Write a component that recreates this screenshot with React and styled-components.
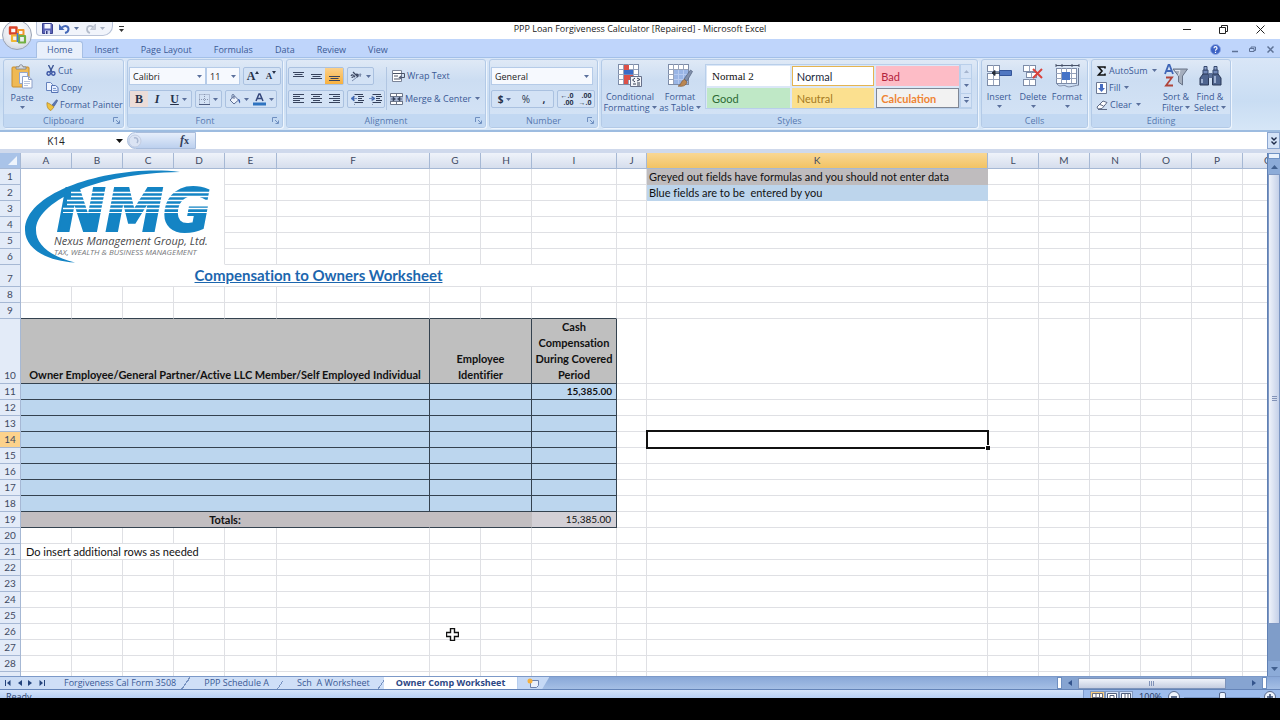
import React, { useState } from 'react'
import styled, { createGlobalStyle, css } from 'styled-components'

const ui = `'Open Sans', 'Noto Sans', sans-serif`
const sheetFont = `Lato, 'Liberation Sans', sans-serif`

const COLS = [
    ['A', 51], ['B', 51], ['C', 51], ['D', 51], ['E', 52], ['F', 153], ['G', 51], ['H', 51], ['I', 85],
    ['J', 30], ['K', 341], ['L', 51], ['M', 51], ['N', 51], ['O', 51], ['P', 51], ['Q', 51],
]
const LETTERS = COLS.map(([letter]) => letter)
const TABS = ['Home', 'Insert', 'Page Layout', 'Formulas', 'Data', 'Review', 'View']
const SHEETS = ['Forgiveness Cal Form 3508', 'PPP Schedule A', 'Sch  A Worksheet', 'Owner Comp Worksheet']

// what every row holds; cells that are not listed stay empty
const CONTENT = {
    1: [
        { at: 'A', span: 4, rows: 6, kind: 'logo' },
        { at: 'K', text: 'Greyed out fields have formulas and you should not enter data', kind: 'grey' },
    ],
    2: [{ at: 'K', text: 'Blue fields are to be  entered by you', kind: 'blue' }],
    7: [{ at: 'A', span: 9, text: 'Compensation to Owners Worksheet', kind: 'title' }],
    10: [
        { at: 'A', span: 6, text: 'Owner Employee/General Partner/Active LLC Member/Self Employed Individual', kind: 'head' },
        { at: 'G', span: 2, text: 'Employee\nIdentifier', kind: 'head' },
        { at: 'I', text: 'Cash\nCompensation\nDuring Covered\nPeriod', kind: 'head' },
    ],
    19: [
        { at: 'A', span: 6, text: 'Totals:', kind: 'total' },
        { at: 'G', span: 2, kind: 'total' },
        { at: 'I', text: '15,385.00', kind: 'sum' },
    ],
    21: [{ at: 'A', span: 4, text: 'Do insert additional rows as needed', kind: 'note' }],
}
for (let r = 11; r <= 18; r++) {
    CONTENT[r] = [
        { at: 'A', span: 6, kind: 'entry' },
        { at: 'G', span: 2, kind: 'entry' },
        { at: 'I', text: r === 11 ? '15,385.00' : '', kind: 'entry' },
    ]
}

const cellsOf = (row) => {
    const out = []
    const list = CONTENT[row] || []
    let i = row >= 2 && row <= 6 ? 4 : 0
    while (i < LETTERS.length) {
        const found = list.find((c) => c.at === LETTERS[i])
        out.push(found || { at: LETTERS[i] })
        i += (found && found.span) || 1
    }
    return out
}

/* ---------- icons ---------- */

const Svg = ({ w = 12, h = 12, children, ...rest }) => (
    <svg width={w} height={h} viewBox={`0 0 ${w} ${h}`} fill="none" aria-hidden="true" {...rest}>{children}</svg>
)
const Arrow = ({ color = '#5a709c' }) => <Svg w={5} h={3}><path d="M0 0h5L2.500 3z" fill={color} /></Svg>
const Launcher = () => (
    <Svg w={7} h={7}><path d="M.5 5V.5H5M3 3l3 3M6.500 3.500v3h-3" stroke="#6f8fc0" /></Svg>
)
const OfficeLogo = () => (
    <Svg w={20} h={20}>
        <path d="M3 2.500h6.500v6H3zM9.500 2.500v7" stroke="#d9432a" strokeWidth="2.400" strokeLinejoin="round" />
        <path d="M11 5h5.500v5H11z" stroke="#f0962c" strokeWidth="2" strokeLinejoin="round" />
        <path d="M5 10.500h5.500v5.500H5z" stroke="#f2b632" strokeWidth="2.200" strokeLinejoin="round" />
        <path d="M12 11h6v6.500h-6z" stroke="#72b043" strokeWidth="2.200" strokeLinejoin="round" />
        <path d="M10.500 8v9" stroke="#3f7fd0" strokeWidth="1.600" />
    </Svg>
)
const SaveIcon = () => (
    <Svg w={11} h={11}>
        <path d="M.5.5h9l1 1v9H.5z" fill="#5b63b8" stroke="#3b4390" />
        <path d="M2.500 1h6v4.500h-6z" fill="#f4f6ff" /><path d="M3 7.500h5V11H3z" fill="#cfd6f2" /><path d="M4 8h1.500v3H4z" fill="#333a80" />
    </Svg>
)
const UndoIcon = ({ color = '#4468b8' }) => (
    <Svg w={11} h={11}><path d="M3 4.500c3-2.500 6.500-1.500 6.500 1.500 0 2-1.500 3.500-3.500 4" stroke={color} strokeWidth="2" /><path d="M0 1v6h5.500z" fill={color} /></Svg>
)
const RedoIcon = () => (
    <Svg w={11} h={11}><path d="M8 4C5 2 2 3 2 6c0 2 1 3.500 3 4" stroke="#b4bccb" strokeWidth="1.800" /><path d="M10.500 1v5.500H5.500z" fill="#c6ccd8" stroke="#a4adbf" strokeWidth=".5" /></Svg>
)
const PasteIcon = () => (
    <Svg w={24} h={25}>
        <rect x="2" y="3" width="17" height="20" rx="1" fill="#efb954" stroke="#c98d2c" />
        <path d="M6 5V3h3c0-3 4-3 4 0h3v2z" fill="#d7dbe2" stroke="#777f8c" strokeWidth=".8" />
        <path d="M9.500 8.500h8v11h-8z" fill="#f3f6fd" stroke="#94a6cb" />
        <path d="M12.500 12.500h6l3.500 3v8.500h-9.500z" fill="#fff" stroke="#8ea1c9" /><path d="M18.500 12.500v3H22" stroke="#8ea1c9" />
        <path d="M14 17.500h6M14 19.500h6M14 21.500h4" stroke="#b9c5df" />
    </Svg>
)
const CutIcon = () => (
    <Svg w={10} h={11}>
        <path d="M2.500 0 6 7M7.500 0 4 7" stroke="#3c5694" strokeWidth="1.400" />
        <circle cx="2.700" cy="8.500" r="1.700" stroke="#3b55a5" strokeWidth="1.400" /><circle cx="7.300" cy="8.500" r="1.700" stroke="#3b55a5" strokeWidth="1.400" />
    </Svg>
)
const CopyIcon = () => (
    <Svg w={13} h={11}>
        <path d="M.5.5h4l2 2v6h-6z" fill="#eff4ff" stroke="#6582bd" /><path d="M5.500 3.500h4l2.500 2v5H5.500z" fill="#e4edff" stroke="#5673b3" />
        <path d="M7 6.500h3M7 8.500h4" stroke="#7e9bd0" />
    </Svg>
)
const BrushIcon = () => (
    <Svg w={12} h={12}>
        <path d="M6 6 10.500.8l1.200.8L8 7.500z" fill="#5c78b6" stroke="#3f5588" strokeWidth=".6" />
        <path d="M1 3.500 4 5l4 3-3 3.500C2.500 11 .5 8 1 3.500z" fill="#f0c33f" stroke="#b18322" strokeWidth=".7" />
    </Svg>
)
const BordersIcon = () => (
    <Svg w={11} h={11}><path d="M.5.5h10v10M.5.5v10M5.500 0v10M0 5.500h10" stroke="#8b98b2" strokeDasharray="1 1" /><path d="M0 10.500h11" stroke="#4c5c80" /></Svg>
)
const FillIcon = () => (
    <Svg w={12} h={11}><path d="M1 6 5.500 2l4 4-4.500 4z" fill="#eef3fc" stroke="#5d6f95" /><path d="M5 5V1.500C5 0 3 0 3 1.500V4" stroke="#5d6f95" /><path d="M9 5c2 0 2.500 2 2 4.500C10 9 9.500 7 9 5z" fill="#3c5fae" /></Svg>
)
const FontColorIcon = () => (
    <Svg w={13} h={13}><path d="M3 8 6 1h1l3 7M4.200 5.500h4.600" stroke="#34477c" strokeWidth="1.500" /><path d="M0 9.500h13v3H0z" fill="#2e73c0" /></Svg>
)
const Lines = ({ d }) => <Svg w={11} h={10}><path d={d} stroke="#38445e" strokeWidth="1.200" /></Svg>
const ALIGN = {
    top: 'M0 1.500h11M1.500 3.500h8M0 5.500h11', middle: 'M0 3.500h11M1.500 5.500h8M0 7.500h11', bottom: 'M0 5.500h11M1.500 7.500h8M0 9.500h11',
    left: 'M0 .5h11M0 2.500h7M0 4.500h11M0 6.500h7M0 8.500h11', center: 'M0 .5h11M2 2.500h7M0 4.500h11M2 6.500h7M0 8.500h11', right: 'M0 .5h11M4 2.500h7M0 4.500h11M4 6.500h7M0 8.500h11',
}
const OrientIcon = () => (
    <Svg w={13} h={11}><path d="M2 10 11 3M11 3l-1 3M11 3 8 3.500" stroke="#7c8cab" /><path d="M1 5c1-2 3-1 4 1M2 7c0-1 2-2 3-1M3 1l5 5M6 4c1-2 3 0 1.500 2" stroke="#3c4863" strokeWidth="1.200" /></Svg>
)
const IndentIcon = ({ out }) => (
    <Svg w={13} h={11}>
        <path d="M3 .5h9M7 2.500h6M7 4.500h4M7 6.500h6M3 8.500h9" stroke="#333f59" strokeWidth="1.200" />
        <path d={out ? 'M0 4.500 3 2v5zM3 4.500h3' : 'M6 4.500 3 2v5zM0 4.500h3'} fill="#3f68b5" stroke="#3f68b5" strokeWidth=".7" /><path d="M3.500 0v11" stroke="#8492ad" strokeDasharray="1 1" />
    </Svg>
)
const WrapIcon = () => (
    <Svg w={13} h={12}><path d="M.5.500h9v11h-9z" fill="#fff" stroke="#7b8498" /><path d="M1 3.500h11.500v4H8M2 6h4M2 9h6" stroke="#4a5366" /><path d="M9.500 5 6.500 7.500l3 2.500z" fill="#56617a" /></Svg>
)
const MergeIcon = () => (
    <Svg w={13} h={12}><path d="M.5.5h12v11H.5zM.5 3.500h12M.5 8.500h12M6.500.5v3M6.500 8.500v3" fill="#fff" stroke="#6c768a" /><path d="M0 6h13" stroke="#aab8d4" strokeWidth="4" /><path d="M1 6h3M12 6H9M3 4l2.500 2L3 8zM10 4 7.500 6 10 8z" fill="#333f59" stroke="#333f59" strokeWidth=".6" /></Svg>
)
const Table = ({ x = 0, y = 0, c = 4, r = 4, s = 5 }) => (
    <g>
        <rect x={x + 0.5} y={y + 0.5} width={c * s} height={r * s} fill="#fff" stroke="#7d8ca8" />
        {Array.from({ length: c - 1 }, (_, i) => <path key={'c' + i} d={`M${x + 0.5 + (i + 1) * s} ${y}v${r * s}`} stroke="#97a3bb" />)}
        {Array.from({ length: r - 1 }, (_, i) => <path key={'r' + i} d={`M${x} ${y + 0.5 + (i + 1) * s}h${c * s}`} stroke="#97a3bb" />)}
    </g>
)
const ConditionalIcon = () => (
    <Svg w={24} h={24}>
        <Table /><path d="M6 1h5v5H6zM6 11h9v5H6zM6 16h4v4H6z" fill="#dc5048" /><path d="M6 6h9v4.500H6z" fill="#3a6cc7" />
        <path d="M12.500 12.500h11v10h-11z" fill="#f3f5fa" stroke="#66708a" /><path d="m17 14-2.500 2 2.500 2M19 14l3 1.500-3 1.500M15 20h3M19 19h3M19 21h3" stroke="#333c52" />
    </Svg>
)
const FormatTableIcon = () => (
    <Svg w={25} h={24}>
        <Table /><path d="M6 6h14v14H6z" fill="#7fa2df" fillOpacity=".8" /><path d="M10.500 6v14M15.500 6v14M6 10.500h14M6 15.500h14" stroke="#b5caf0" />
        <path d="M16 15 22.500 6l2 1.500L19 17z" fill="#8190ab" stroke="#53617e" strokeWidth=".7" /><path d="M10 22c3 0 3-6 6.500-6.500L19 18c-1 4-5 5-9 4z" fill="#b98652" stroke="#7a532d" strokeWidth=".6" />
    </Svg>
)
const InsertIcon = () => (
    <Svg w={25} h={24}><Table c={2} r={1} s={6} y={1} /><Table c={2} r={2} s={6} y={9} /><path d="M12.500 6.500h12v5h-12z" fill="#5077c1" stroke="#35569a" /><path d="M5 9h8M5 9l3-2.500V11.500z" fill="#222" stroke="#28303f" /></Svg>
)
const DeleteIcon = () => (
    <Svg w={21} h={24}><Table c={2} r={1} s={6} y={1} /><Table c={2} r={1} s={5} x={3} y={8} /><Table c={2} r={1} s={6} y={15} /><path d="m10 5 9 9M19 5l-9 9" stroke="#d9433c" strokeWidth="2" /></Svg>
)
const FormatIcon = () => (
    <Svg w={25} h={24}><Table x={1} y={4} c={4} r={3} s={5} /><path d="M7 8h8v8H7z" fill="#4674c7" /><path d="M1 1.500h23M1 0v3M24 0v3M7 0v3M17 0v3" stroke="#49536a" /><path d="M2 20c3 4 6 0 9 2s6 0 13-1" stroke="#7c8aa6" /><path d="M23.500 4v17" stroke="#6d7b97" /></Svg>
)
const FillDownIcon = () => (
    <Svg w={11} h={12}><path d="M.5.5h10v11H.5z" fill="#fff" stroke="#6c7994" /><path d="M4 2h3v4h2l-3.500 4L2 6h2z" fill="#456bc1" /></Svg>
)
const EraserIcon = () => (
    <Svg w={12} h={10}><path d="M1 7 7 1l4 1.500L6 8.500l-4 .5z" fill="#fff" stroke="#5d6a86" /><path d="M4 4.500 7.500 6M2 9.500h9" stroke="#5d6a86" /></Svg>
)
const SortIcon = () => (
    <Svg w={24} h={24}>
        <path d="M9 5h14.500l-5 7v9l-4-3v-6z" fill="#a5aebd" stroke="#697488" /><path d="M11 6.500h5l-1.500 5" stroke="#e2e7ef" />
        <path d="m1 10 3.500-9h1L9 10M2.500 7h5" stroke="#3f66b6" strokeWidth="1.800" /><path d="M2 13.500h6L2 21.500h7" stroke="#b0443b" strokeWidth="1.800" />
    </Svg>
)
const FindIcon = () => (
    <Svg w={23} h={24}>
        <path d="M4 6h5v6H4zM14 6h5v6h-5z" fill="#7188b8" stroke="#37496f" /><path d="M5 2.500h3V6H5zM15 2.500h3V6h-3z" fill="#8fa3cc" stroke="#37496f" />
        <path d="M1 14 4 10h5.500v11H1zM22 14l-3-4h-5.500v11H22z" fill="#4e648f" stroke="#2a3857" /><path d="M9.500 9h4v5h-4z" fill="#5b7099" /><path d="M3 15v4M16 12v7" stroke="#b9c8e6" strokeWidth="1.500" />
    </Svg>
)

const NmgLogo = () => (
    <svg width="203" height="95" viewBox="0 0 203 95" role="img" aria-label="Nexus Management Group, Ltd.">
        <path d="M159 3C97-5 4 20 4 61c0 19 22 31 50 32.500C29 87 15 76 15 61 15 34 72 4 159 3z" fill="#1484c4" />
        <text x="36" y="62" fill="#1484c4" stroke="#1484c4" strokeWidth="2" fontFamily="'DejaVu Sans', sans-serif" fontSize="58" fontWeight="700" fontStyle="italic">NMG</text>
        <path d="M50 23.500h152M50 27.500h152M46 31.500h156M46 35.500h156M42 39.500h160" stroke="#fff" strokeWidth="1.400" />
        <path d="M42 43.500h160" stroke="#fff" />
        <text x="33" y="76" fill="#4a4a4c" fontFamily={ui} fontSize="11" fontStyle="italic">Nexus Management Group, Ltd.</text>
        <text x="33" y="86" fill="#77797c" fontFamily={ui} fontSize="8" fontStyle="italic">TAX, WEALTH &amp; BUSINESS MANAGEMENT</text>
    </svg>
)

/* ---------- page ---------- */

const App = () => {
    const [tab, setTab] = useState('Home')
    const [sheet, setSheet] = useState(SHEETS[3])
    const [formula, setFormula] = useState('')

    return (
        <Screen>
            <Global />
            <Window>
                <OfficeButton aria-label="Office Button"><OfficeLogo /></OfficeButton>
                <TitleBar>
                    <TitleSide>
                        <QuickAccess>
                            <Plain aria-label="Save"><SaveIcon /></Plain>
                            <Plain aria-label="Undo"><UndoIcon /><Arrow /></Plain>
                            <Plain aria-label="Redo"><RedoIcon /><Arrow color="#a7b0c2" /></Plain>
                        </QuickAccess>
                        <Plain aria-label="Customize Quick Access Toolbar"><Svg w={5} h={6}><path d="M0 .5h5" stroke="#333" /><path d="M0 3h5L2.500 6z" fill="#333" /></Svg></Plain>
                    </TitleSide>
                    <Title>PPP Loan Forgiveness Calculator [Repaired] - Microsoft Excel</Title>
                    <WindowButtons>
                        <Plain aria-label="Minimize"><Svg w={8} h={9}><path d="M0 4.500h8" stroke="#222" /></Svg></Plain>
                        <Plain aria-label="Restore"><Svg w={9} h={9}><path d="M.5 2.500h6v6h-6zM2.500 2V.5h6v6H7" stroke="#222" /></Svg></Plain>
                        <Plain aria-label="Close"><Svg w={9} h={9}><path d="m.5.500 8 8M8.500.5l-8 8" stroke="#222" /></Svg></Plain>
                    </WindowButtons>
                </TitleBar>
                <TabBar>
                    {TABS.map((name) => (
                        <RibbonTab key={name} $on={name === tab} onClick={() => setTab(name)}>{name}</RibbonTab>
                    ))}
                    <BookButtons>
                        <Plain aria-label="Help"><Svg w={11} h={11}><circle cx="5.500" cy="5.500" r="5" fill="#3c62c4" stroke="#8faae6" /><path d="M4 4.200c0-2 3-2 3 0C7 5.500 5.500 5.300 5.500 6.700M5.500 7.700v1.200" stroke="#fff" strokeWidth="1.200" /></Svg></Plain>
                        <Plain aria-label="Minimize workbook"><Svg w={6} h={7}><path d="M0 5.500h6" stroke="#5e7296" strokeWidth="1.500" /></Svg></Plain>
                        <Plain aria-label="Restore workbook"><Svg w={7} h={7}><path d="M.5 2.500h4.500v3H.5zM2 2V1h4.500v3.500H5" stroke="#5e7296" /></Svg></Plain>
                        <Plain aria-label="Close workbook"><Svg w={7} h={7}><path d="m.5.500 6 6M6.500.5l-6 6" stroke="#5e7296" strokeWidth="1.500" /></Svg></Plain>
                    </BookButtons>
                </TabBar>

                <Ribbon>
                    <Group $w={121}>
                        <GroupBody>
                            <Big><PasteIcon />Paste<Arrow /></Big>
                            <Stack>
                                <Small><CutIcon />Cut</Small>
                                <Small><CopyIcon />Copy</Small>
                                <Small><BrushIcon />Format Painter</Small>
                            </Stack>
                        </GroupBody>
                        <GroupLabel>Clipboard<Launch aria-label="Clipboard options"><Launcher /></Launch></GroupLabel>
                    </Group>

                    <Group $w={156}>
                        <Rows>
                            <Line>
                                <Picker>
                                    <Combo $w={77} aria-label="Font"><option>Calibri</option></Combo><Arrow />
                                </Picker>
                                <Picker>
                                    <Combo $w={34} aria-label="Font size"><option>11</option></Combo><Arrow />
                                </Picker>
                                <Spacer />
                                <Set>
                                    <Tool $serif aria-label="Increase font size"><b>A</b><Svg w={4} h={10}><path d="M0 3h4L2 0z" fill="#27324a" /></Svg></Tool>
                                    <Tool $serif $small aria-label="Decrease font size"><b>A</b><Svg w={4} h={10}><path d="M0 0h4L2 3z" fill="#27324a" /></Svg></Tool>
                                </Set>
                            </Line>
                            <Line>
                                <Set>
                                    <Tool $serif $warm aria-label="Bold"><b>B</b></Tool>
                                    <Tool $serif aria-label="Italic"><b><i>I</i></b></Tool>
                                    <Tool $wide $serif aria-label="Underline"><b><u>U</u></b><Arrow /></Tool>
                                </Set>
                                <Set><Tool $wide aria-label="Borders"><BordersIcon /><Arrow /></Tool></Set>
                                <Set>
                                    <Tool $wide aria-label="Fill color"><FillIcon /><Arrow /></Tool>
                                    <Tool $wide aria-label="Font color"><FontColorIcon /><Arrow /></Tool>
                                </Set>
                            </Line>
                        </Rows>
                        <GroupLabel>Font<Launch aria-label="Font options"><Launcher /></Launch></GroupLabel>
                    </Group>

                    <Group $w={200}>
                        <GroupBody>
                            <Rows>
                                <Line>
                                    <Set>
                                        <Tool aria-label="Top align"><Lines d={ALIGN.top} /></Tool>
                                        <Tool aria-label="Middle align"><Lines d={ALIGN.middle} /></Tool>
                                        <Tool $on aria-label="Bottom align"><Lines d={ALIGN.bottom} /></Tool>
                                    </Set>
                                    <Set><Tool $wide aria-label="Orientation"><OrientIcon /><Arrow /></Tool></Set>
                                </Line>
                                <Line>
                                    <Set>
                                        <Tool aria-label="Align left"><Lines d={ALIGN.left} /></Tool>
                                        <Tool aria-label="Center"><Lines d={ALIGN.center} /></Tool>
                                        <Tool aria-label="Align right"><Lines d={ALIGN.right} /></Tool>
                                    </Set>
                                    <Set>
                                        <Tool aria-label="Decrease indent"><IndentIcon out /></Tool>
                                        <Tool aria-label="Increase indent"><IndentIcon /></Tool>
                                    </Set>
                                </Line>
                            </Rows>
                            <Divided>
                                <Small><WrapIcon />Wrap Text</Small>
                                <Small><MergeIcon />Merge &amp; Center<Arrow /></Small>
                            </Divided>
                        </GroupBody>
                        <GroupLabel>Alignment<Launch aria-label="Alignment options"><Launcher /></Launch></GroupLabel>
                    </Group>

                    <Group $w={109}>
                        <Rows>
                            <Line>
                                <Picker>
                                    <Combo $w={102} aria-label="Number format"><option>General</option></Combo><Arrow />
                                </Picker>
                            </Line>
                            <Line>
                                <Set>
                                    <Tool $wide aria-label="Accounting format"><b>$</b><Arrow /></Tool>
                                    <Tool aria-label="Percent">%</Tool>
                                    <Tool aria-label="Comma"><b>,</b></Tool>
                                </Set>
                                <Set>
                                    <Tool $digits aria-label="Increase decimal">←.0{'\n'}.00</Tool>
                                    <Tool $digits aria-label="Decrease decimal">.00{'\n'}→.0</Tool>
                                </Set>
                            </Line>
                        </Rows>
                        <GroupLabel>Number<Launch aria-label="Number options"><Launcher /></Launch></GroupLabel>
                    </Group>

                    <Group $w={377}>
                        <GroupBody>
                            <Big $w={56}>
                                <ConditionalIcon />
                                <TwoLines><span>Conditional</span><span>Formatting<Arrow /></span></TwoLines>
                            </Big>
                            <Big $w={44}>
                                <FormatTableIcon />
                                <TwoLines><span>Format</span><span>as Table<Arrow /></span></TwoLines>
                            </Big>
                            <Gallery>
                                <Swatch $bg="#fff" $color="#111" $serif>Normal 2</Swatch>
                                <Swatch $bg="#fff" $color="#222a3c" $line="#e5b450">Normal</Swatch>
                                <Swatch $bg="#fdbcc6" $color="#b3243c">Bad</Swatch>
                                <Swatch $bg="#bfe8c6" $color="#2c6b35">Good</Swatch>
                                <Swatch $bg="#fbe08f" $color="#a57a1e">Neutral</Swatch>
                                <Swatch $bg="#f2f2f2" $color="#ef8432" $line="#7f8795" $bold>Calculation</Swatch>
                            </Gallery>
                            <GalleryScroll>
                                <Plain aria-label="Previous styles"><Svg w={5} h={3}><path d="M0 3h5L2.500 0z" fill="#a5b4cd" /></Svg></Plain>
                                <Plain aria-label="Next styles"><Arrow /></Plain>
                                <Plain aria-label="More styles"><Svg w={5} h={6}><path d="M0 .5h5" stroke="#5a709c" /><path d="M0 3h5L2.500 6z" fill="#5a709c" /></Svg></Plain>
                            </GalleryScroll>
                        </GroupBody>
                        <GroupLabel>Styles</GroupLabel>
                    </Group>

                    <Group $w={107}>
                        <GroupBody>
                            <Big $w={34}><InsertIcon />Insert<Arrow /></Big>
                            <Big $w={34}><DeleteIcon />Delete<Arrow /></Big>
                            <Big $w={34}><FormatIcon />Format<Arrow /></Big>
                        </GroupBody>
                        <GroupLabel>Cells</GroupLabel>
                    </Group>

                    <Group $w={140}>
                        <GroupBody>
                            <Stack $w={67}>
                                <Small><Svg w={11} h={10}><path d="M9 2.500V1H2.500L6 5 2.500 9H9V7.500" stroke="#111" strokeWidth="1.600" /></Svg>AutoSum<Arrow /></Small>
                                <Small><FillDownIcon />Fill<Arrow /></Small>
                                <Small><EraserIcon />Clear<Arrow /></Small>
                            </Stack>
                            <Big $w={34}>
                                <SortIcon />
                                <TwoLines><span>Sort &amp;</span><span>Filter<Arrow /></span></TwoLines>
                            </Big>
                            <Big $w={34}>
                                <FindIcon />
                                <TwoLines><span>Find &amp;</span><span>Select<Arrow /></span></TwoLines>
                            </Big>
                        </GroupBody>
                        <GroupLabel>Editing</GroupLabel>
                    </Group>
                </Ribbon>

                <FormulaBar>
                    <NameBox aria-label="Name box" defaultValue="K14" />
                    <Plain aria-label="Name list"><Svg w={7} h={4}><path d="M0 0h7L3.500 4z" fill="#111" /></Svg></Plain>
                    <FxPill>
                        <Svg w={14} h={14}><circle cx="7" cy="7" r="6" fill="#dbe4f4" stroke="#c2cde2" /><path d="M6 4c3-1 5 2 3 5" stroke="#aab8d2" strokeWidth="1.500" /></Svg>
                        <Plain aria-label="Insert function"><i>f</i><small>x</small></Plain>
                    </FxPill>
                    <FormulaInput aria-label="Formula bar" value={formula} onChange={(e) => setFormula(e.target.value)} />
                    <Expand aria-label="Expand formula bar"><Svg w={6} h={8}><path d="m.5.500 2.500 2.500L5.500.5M.5 4.500 3 7l2.500-2.500" stroke="#1d2b4a" strokeWidth="1.400" /></Svg></Expand>
                </FormulaBar>

                <Workspace>
                    <SheetArea>
                        <Grid>
                            <colgroup>
                                <Col $w={21} />
                                {COLS.map(([letter, w]) => <Col key={letter} $w={w} />)}
                            </colgroup>
                            <thead>
                                <tr>
                                    <Corner aria-label="Select all"><Svg w={9} h={9}><path d="M9 0v9H0z" fill="#eef4fc" /></Svg></Corner>
                                    {LETTERS.map((letter) => <ColHead key={letter} scope="col" $on={letter === 'K'}>{letter}</ColHead>)}
                                </tr>
                            </thead>
                            <tbody>
                                {Array.from({ length: 29 }, (_, i) => i + 1).map((row) => (
                                    <tr key={row}>
                                        <RowHead scope="row" $on={row === 14}>{row}</RowHead>
                                        {cellsOf(row).map(({ at, span, rows, text, kind }) => (
                                            <Cell
                                                key={at}
                                                colSpan={span}
                                                rowSpan={rows}
                                                $kind={kind}
                                                $edge={row === 9 && at < 'J'}
                                                $active={row === 14 && at === 'K'}
                                            >
                                                {kind === 'logo' ? <NmgLogo /> : text}
                                            </Cell>
                                        ))}
                                    </tr>
                                ))}
                            </tbody>
                        </Grid>
                        <Pointer><Svg w={13} h={13}><path d="M4.500.5h4v4h4v4h-4v4h-4v-4h-4v-4h4z" fill="#fff" stroke="#111" strokeWidth="1.400" /></Svg></Pointer>
                    </SheetArea>
                    <VScroll>
                        <SplitTop />
                        <VArrow aria-label="Scroll up"><Svg w={7} h={4}><path d="M0 4h7L3.500 0z" fill="#41608f" /></Svg></VArrow>
                        <VThumb><Svg w={5} h={6}><path d="M0 .5h5M0 2.500h5M0 4.500h5" stroke="#8293b8" /></Svg></VThumb>
                        <VTrack />
                        <VArrow aria-label="Scroll down"><Svg w={7} h={4}><path d="M0 0h7L3.500 4z" fill="#41608f" /></Svg></VArrow>
                    </VScroll>
                </Workspace>

                <SheetBar>
                    <SheetNav>
                        <Plain aria-label="First sheet"><Svg w={6} h={6}><path d="M.5 0v6" stroke="#25447c" /><path d="M5.500 0v6L2 3z" fill="#25447c" /></Svg></Plain>
                        <Plain aria-label="Previous sheet"><Svg w={4} h={6}><path d="M4 0v6L0 3z" fill="#25447c" /></Svg></Plain>
                        <Plain aria-label="Next sheet"><Svg w={4} h={6}><path d="M0 0v6l4-3z" fill="#25447c" /></Svg></Plain>
                        <Plain aria-label="Last sheet"><Svg w={6} h={6}><path d="M5.500 0v6" stroke="#25447c" /><path d="M.5 0v6L4 3z" fill="#25447c" /></Svg></Plain>
                    </SheetNav>
                    {SHEETS.map((name) => (
                        <SheetTab key={name} $on={name === sheet} onClick={() => setSheet(name)}>{name}</SheetTab>
                    ))}
                    <NewSheet aria-label="Insert worksheet"><Svg w={12} h={10}><path d="M3.500 2.500h8v5l-2 2h-6z" fill="#e9f0fc" stroke="#6d82ad" /><circle cx="3" cy="3" r="2.500" fill="#f4b03e" /></Svg></NewSheet>
                    <HScroll>
                        <SplitSide />
                        <Plain aria-label="Scroll left"><Svg w={4} h={6}><path d="M4 0v6L0 3z" fill="#34548c" /></Svg></Plain>
                        <HThumb><Svg w={6} h={5}><path d="M.5 0v5M2.500 0v5M4.500 0v5" stroke="#8293b8" /></Svg></HThumb>
                        <HTrack />
                        <Plain aria-label="Scroll right"><Svg w={4} h={6}><path d="M0 0v6l4-3z" fill="#34548c" /></Svg></Plain>
                        <SplitSide />
                    </HScroll>
                </SheetBar>
                <StatusBar>
                    <Ready>Ready</Ready>
                    <ViewTools>
                        <Views>
                            <ViewButton $on aria-label="Normal view"><Svg w={11} h={9}><path d="M.5.5h10v8H.5zM.5 4.500h10M4 .5v8M7.500.5v8" fill="#fff" stroke="#6b6f7d" /></Svg></ViewButton>
                            <ViewButton aria-label="Page layout"><Svg w={10} h={9}><path d="M.5.500h9v8h-9zM3 2.500h4v5H3z" fill="#fff" stroke="#52607c" /></Svg></ViewButton>
                            <ViewButton aria-label="Page break preview"><Svg w={10} h={9}><path d="M.5.500h9v8h-9zM4 0v5M7 0v5" fill="#fff" stroke="#52607c" /></Svg></ViewButton>
                        </Views>
                        <Percent>100%</Percent>
                        <Plain aria-label="Zoom out"><Svg w={12} h={12}><circle cx="6" cy="6" r="5.500" fill="#eef4fd" stroke="#56688c" /><path d="M3 6h6" stroke="#33486f" strokeWidth="1.500" /></Svg></Plain>
                        <Zoom type="range" aria-label="Zoom" defaultValue="50" />
                        <Plain aria-label="Zoom in"><Svg w={12} h={12}><circle cx="6" cy="6" r="5.500" fill="#eef4fd" stroke="#56688c" /><path d="M3 6h6M6 3v6" stroke="#33486f" strokeWidth="1.500" /></Svg></Plain>
                    </ViewTools>
                </StatusBar>
            </Window>
        </Screen>
    )
}

export default App

const Global = createGlobalStyle`
    *{
        box-sizing:border-box;
    }
    body{
        margin:0;
        background:#000;
    }
    button, input, select{
        font:inherit;
        color:inherit;
        margin:0;
    }
    button{
        padding:0;
        border:0;
        background:none;
    }
`
const Screen = styled.div`
    display:flex;
    flex-direction:column;
    height:100vh;
    padding:22px 0;
    background:#000;
    font-family:${ui};
    font-size:10px;
    color:#3b5a96;
`
const Window = styled.main`
    position:relative;
    display:flex;
    flex-direction:column;
    flex:1;
    min-height:0;
    overflow:hidden;
    background:#fff;
`
const Plain = styled.button`
    display:flex;
    align-items:center;
    gap:4px;
`
const OfficeButton = styled.button`
    position:absolute;
    z-index:2;
    left:2px;
    top:-2px;
    width:30px;
    height:30px;
    display:flex;
    align-items:center;
    justify-content:center;
    border-radius:50%;
    border:1px solid #9aa3b5;
    background:radial-gradient(circle at 50% 30%, #fff, #e6e9f0 60%, #c3c9d6);
`
const TitleBar = styled.header`
    display:grid;
    grid-template-columns:1fr auto 1fr;
    align-items:center;
    height:17px;
    flex:none;
    padding-bottom:3px;
`
const TitleSide = styled.div`
    display:flex;
    align-items:center;
    gap:6px;
    padding-left:36px;
`
const QuickAccess = styled.div`
    display:flex;
    align-items:center;
    gap:6px;
    width:77px;
    height:14px;
    padding-left:5px;
    border:1px solid #b9c3d8;
    border-top:0;
    border-radius:0 0 10px 4px;
    background:#f1f4fb;
`
const Title = styled.h1`
    margin:0;
    font-size:9px;
    font-weight:400;
    line-height:14px;
    color:#222;
`
const WindowButtons = styled.div`
    display:flex;
    align-items:center;
    justify-content:flex-end;
    gap:28px;
    padding-right:15px;
`
const TabBar = styled.nav`
    display:flex;
    flex:none;
    height:19px;
    padding:2px 6px 0 36px;
    background:#bfd5fb;
    border-bottom:1px solid #a3c0e8;
`
const RibbonTab = styled.button`
    height:17px;
    padding:0 11px;
    font-size:9px;
    line-height:16px;
    border-radius:3px 3px 0 0;
    ${({ $on }) => $on && css`
        background:#e9f0fb;
        border:1px solid #a6bfe4;
        border-bottom:0;
        padding:0 10px;
    `}
`
const BookButtons = styled.div`
    display:flex;
    align-items:center;
    gap:11px;
    margin-left:auto;
`
const Ribbon = styled.section`
    display:flex;
    flex:none;
    gap:3px;
    height:74px;
    padding:1px 3px 2px;
    background:linear-gradient(#d9e6f7, #c9ddf3 60%, #d6e6f7);
    border-bottom:2px solid #9dbce0;
`
const Group = styled.div`
    display:flex;
    flex-direction:column;
    flex:none;
    width:${({ $w }) => $w}px;
    border:1px solid #b3cae7;
    border-radius:3px;
    background:linear-gradient(#dfe9f6, #ccddf2 30%, #d5e4f6);
    box-shadow:1px 1px 0 #eef5fd;
    overflow:hidden;
`
const GroupBody = styled.div`
    display:flex;
    flex:1;
    min-height:0;
`
const GroupLabel = styled.div`
    position:relative;
    flex:none;
    height:13px;
    text-align:center;
    font-size:9px;
    line-height:13px;
    color:#5779b0;
    background:#c2d8f2;
`
const Launch = styled.button`
    position:absolute;
    right:3px;
    top:3px;
    display:flex;
`
const Big = styled.button`
    display:flex;
    flex-direction:column;
    align-items:center;
    justify-content:flex-start;
    gap:3px;
    width:${({ $w }) => $w || 36}px;
    flex:none;
    padding-top:4px;
    font-size:9px;
    line-height:11px;
    text-align:center;
    white-space:nowrap;
`
const TwoLines = styled.span`
    display:flex;
    flex-direction:column;
    align-items:center;
    span{
        display:flex;
        align-items:center;
        gap:2px;
    }
`
const Small = styled.button`
    display:flex;
    align-items:center;
    gap:2px;
    height:17px;
    font-size:9px;
    white-space:nowrap;
    > svg:last-child{
        margin-left:2px;
    }
`
const Stack = styled.div`
    display:flex;
    flex-direction:column;
    flex:none;
    padding:2px 0 0 4px;
    width:${({ $w }) => $w ? $w + 'px' : 'auto'};
`
const Rows = styled.div`
    display:flex;
    flex-direction:column;
    flex:1;
    gap:5px;
    padding:7px 1px 0;
`
const Divided = styled.div`
    display:flex;
    flex-direction:column;
    gap:6px;
    margin:7px 0 4px;
    padding-left:3px;
    width:100px;
    border-left:1px solid #b1c6e2;
`
const Line = styled.div`
    display:flex;
    gap:3px;
    height:18px;
`
const Picker = styled.label`
    position:relative;
    display:flex;
    margin-right:-3px;
    > svg{
        position:absolute;
        right:4px;
        top:8px;
        pointer-events:none;
    }
`
const Combo = styled.select`
    appearance:none;
    width:${({ $w }) => $w}px;
    height:18px;
    padding:0 3px;
    border:1px solid #b5cbe8;
    border-radius:0;
    background:#f6f9fe;
    color:#222;
    font-size:9px;
`
const Spacer = styled.span`
    flex:1;
`
const Set = styled.div`
    display:flex;
    border:1px solid #aac1e0;
    border-radius:2px;
    background:#d3e2f5;
`
const Tool = styled.button`
    display:flex;
    align-items:center;
    justify-content:center;
    gap:${({ $wide }) => $wide ? 3 : 0}px;
    width:${({ $wide }) => $wide ? 25 : 18}px;
    height:16px;
    color:#27324a;
    font-family:${({ $serif }) => $serif ? `'Liberation Serif', serif` : ui};
    font-size:${({ $serif, $small }) => $serif ? ($small ? 9 : 12) : 10}px;
    ${({ $on }) => $on && css`
        background:linear-gradient(#fbd089, #f8b13f);
    `}
    ${({ $warm }) => $warm && css`
        background:#ecdcd8;
    `}
    ${({ $digits }) => $digits && css`
        font-size:7px;
        font-weight:700;
        line-height:7px;
        white-space:pre;
        text-align:right;
    `}
`
const Gallery = styled.div`
    display:grid;
    grid-template-columns:repeat(3, 1fr);
    gap:2px;
    flex:1;
    margin:4px 0 5px 3px;
    padding:1px 0 0 1px;
    background:#dbe7f7;
    border:1px solid #b9cfea;
`
const Swatch = styled.button`
    padding:0 4px;
    text-align:left;
    font-size:11px;
    font-family:${({ $serif }) => $serif ? `'Liberation Serif', serif` : sheetFont};
    font-weight:${({ $bold }) => $bold ? 700 : 400};
    color:${({ $color }) => $color};
    background:${({ $bg }) => $bg};
    border:1px solid ${({ $line, $bg }) => $line || $bg};
`
const GalleryScroll = styled.div`
    display:flex;
    flex-direction:column;
    width:12px;
    margin:4px 5px 5px 0;
    border:1px solid #b9cfea;
    background:#d5e3f6;
    button{
        flex:1;
        justify-content:center;
        border-bottom:1px solid #b9cfea;
    }
`
const FormulaBar = styled.div`
    display:flex;
    flex:none;
    height:21px;
    background:#fff;
    border-bottom:4px solid #cfd9ec;
`
const NameBox = styled.input`
    width:112px;
    border:0;
    outline:0;
    background:#fff;
    padding:0;
    text-align:center;
    font-size:10px;
    color:#222;
    & + button{
        margin-left:4px;
    }
`
const FxPill = styled.div`
    display:flex;
    align-items:center;
    justify-content:space-between;
    width:69px;
    margin-left:4px;
    padding-right:6px;
    border:1px solid #a9bddc;
    border-radius:9px 0 0 9px;
    background:linear-gradient(#e6eefb, #bcd0ee);
    button{
        gap:0;
        font-family:'Liberation Serif', serif;
        font-size:12px;
        font-weight:700;
        color:#34405c;
    }
`
const FormulaInput = styled.input`
    flex:1;
    border:0;
    outline:0;
    background:#fff;
`
const Expand = styled.button`
    display:flex;
    align-items:center;
    justify-content:center;
    width:13px;
    border:1px solid #8ba6d0;
    background:#d4e3f8;
`
const Workspace = styled.div`
    display:flex;
    flex:1;
    min-height:0;
`
const SheetArea = styled.div`
    position:relative;
    flex:1;
    min-width:0;
    overflow:hidden;
`
const Grid = styled.table`
    table-layout:fixed;
    width:0;
    border-collapse:separate;
    border-spacing:0;
    font-family:${sheetFont};
    font-size:11px;
    font-variant-ligatures:none;
    line-height:15px;
    color:#111;
`
const Col = styled.col`
    width:${({ $w }) => $w}px;
`
const head = css`
    height:16px;
    padding:0;
    font-size:10px;
    font-weight:400;
    color:#3f4a62;
    border-right:1px solid #a6b8d4;
    border-bottom:1px solid #a6b8d4;
`
const Corner = styled.th`
    ${head}
    background:#a9c3e8;
    text-align:right;
    svg{
        display:block;
        margin:3px 3px 3px auto;
    }
`
const ColHead = styled.th`
    ${head}
    background:${({ $on }) => $on ? 'linear-gradient(#f9d794, #f2c364)' : 'linear-gradient(#eff3fa, #d6deed)'};
`
const RowHead = styled.th`
    ${head}
    vertical-align:bottom;
    background:${({ $on }) => $on ? '#fcd28c' : '#e3ebf8'};
`
const dark = '#34424f'
const kinds = {
    logo: css`
        padding:0;
        border-bottom-color:#fff;
        svg{
            display:block;
        }
    `,
    grey: css`
        background:#bfbcbe;
        border-color:#bfbcbe;
    `,
    blue: css`
        background:#bdd5ec;
        border-color:#bdd5ec;
    `,
    title: css`
        height:22px;
        text-align:center;
        font-size:15px;
        font-weight:700;
        line-height:21px;
        color:#1c66ae;
        text-decoration:underline;
    `,
    head: css`
        height:64px;
        line-height:16px;
        text-align:center;
        font-weight:700;
        white-space:pre-line;
        background:#bfbfbf;
        border-color:${dark};
    `,
    entry: css`
        text-align:right;
        padding-right:4px;
        font-size:10px;
        font-weight:700;
        background:#bcd6ee;
        border-color:${dark};
    `,
    total: css`
        text-align:center;
        font-weight:700;
        background:#c2bec1;
        border-color:#c2bec1;
        border-bottom-color:${dark};
    `,
    sum: css`
        text-align:right;
        padding-right:5px;
        font-size:10px;
        background:#d3d0d6;
        border-color:${dark};
    `,
    note: css`
        padding-left:5px;
    `,
}
const Cell = styled.td`
    height:16px;
    padding:0 2px;
    vertical-align:bottom;
    white-space:pre;
    border-right:1px solid #dfe0e4;
    border-bottom:1px solid #dfe0e4;
    ${({ $kind }) => kinds[$kind]}
    ${({ $edge }) => $edge && css`
        border-bottom-color:${dark};
    `}
    ${({ $active }) => $active && css`
        position:relative;
        &::before{
            content:'';
            position:absolute;
            inset:-2px -2px -2px -1px;
            border:2px solid #111;
        }
        &::after{
            content:'';
            position:absolute;
            right:-3px;
            bottom:-3px;
            width:4px;
            height:4px;
            background:#111;
            border:solid #fff;
            border-width:1px 0 0 1px;
        }
    `}
`
const Pointer = styled.div`
    position:absolute;
    left:446px;
    top:475px;
`
const VScroll = styled.div`
    display:flex;
    flex-direction:column;
    width:13px;
    border-left:1px solid #5f80b4;
    background:#7f9dc9;
`
const SplitTop = styled.div`
    height:6px;
    border:1px solid #6f92c4;
    background:#eaf2fc;
`
const VArrow = styled.button`
    display:flex;
    align-items:center;
    justify-content:center;
    height:15px;
    background:#8cabd8;
`
const VThumb = styled.div`
    display:flex;
    align-items:center;
    justify-content:center;
    flex:12;
    border:1px solid #7d97c3;
    background:linear-gradient(90deg, #eef2fa, #c4d0e8);
`
const VTrack = styled.div`
    flex:1;
`
const SheetBar = styled.div`
    display:flex;
    flex:none;
    height:14px;
    background:linear-gradient(#89a8d8, #a5bfe5);
    border-top:1px solid #7c99c8;
    border-bottom:1px solid #6484b8;
`
const SheetNav = styled.div`
    display:flex;
    align-items:center;
    justify-content:space-between;
    width:50px;
    padding:0 5px;
    background:#cbdcf5;
`
const SheetTab = styled.button`
    padding:0 14px;
    font-size:9px;
    line-height:12px;
    white-space:pre;
    background:linear-gradient(125deg, #cfdff7 0 94%, #7893c1 94% 95%, #cfdff7 95%);
    ${({ $on }) => $on && css`
        padding:0 12px;
        font-weight:700;
        color:#2c4784;
        background:#fff;
    `}
`
const NewSheet = styled.button`
    display:flex;
    align-items:center;
    justify-content:center;
    width:32px;
    background:#c6d9f5;
    clip-path:polygon(0 0, 100% 0, 78% 100%, 0 100%);
`
const HScroll = styled.div`
    display:flex;
    align-items:center;
    gap:6px;
    width:210px;
    margin:0 13px 0 auto;
    background:#86a4d1;
`
const SplitSide = styled.span`
    width:5px;
    height:12px;
    border:1px solid #6f8fc0;
    background:#fff;
`
const HThumb = styled.div`
    display:flex;
    align-items:center;
    justify-content:center;
    width:148px;
    height:11px;
    border:1px solid #7d93ba;
    background:linear-gradient(#f0f3fa, #c5cde0);
`
const HTrack = styled.span`
    flex:1;
`
// only the top of the status bar stays in view
const StatusBar = styled.footer`
    display:flex;
    align-items:flex-start;
    flex:none;
    height:8px;
    overflow:hidden;
    background:linear-gradient(#d5e4fa, #b8d0f4);
`
const Ready = styled.span`
    padding:1px 6px 0;
    font-size:9px;
    line-height:12px;
    color:#2c4470;
`
const ViewTools = styled.div`
    display:flex;
    align-items:flex-start;
    gap:4px;
    margin-left:auto;
    padding:1px 4px 0 6px;
    border-left:1px solid #7e9cce;
    background:#9dbcec;
`
const Views = styled.div`
    display:flex;
`
const ViewButton = styled.button`
    display:flex;
    padding:1px;
    border:1px solid #7f97bf;
    background:${({ $on }) => $on ? '#f7ce83' : '#d3e1f6'};
`
const Percent = styled.span`
    padding:0 2px;
    font-size:9px;
    line-height:12px;
    color:#22345a;
`
const Zoom = styled.input`
    appearance:none;
    width:76px;
    height:12px;
    background:linear-gradient(#7d9ac8, #7d9ac8) center / 100% 1px no-repeat;
    &::-webkit-slider-thumb{
        appearance:none;
        width:7px;
        height:11px;
        border:1px solid #56688c;
        border-radius:2px;
        background:#eef4fd;
    }
`
